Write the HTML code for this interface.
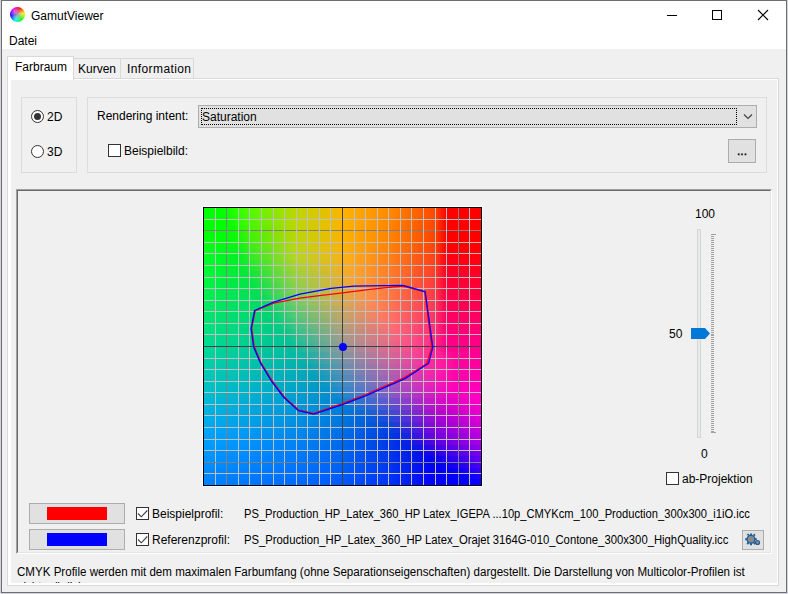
<!DOCTYPE html>
<html><head><meta charset="utf-8">
<style>
*{margin:0;padding:0;box-sizing:border-box}
html,body{width:788px;height:594px;overflow:hidden;background:#d2d2de}
body{position:relative;font-family:"Liberation Sans",sans-serif;font-size:12px;color:#000}
.a{position:absolute}
.t{position:absolute;font-size:12px;line-height:14px;white-space:nowrap;color:#000}
#win{position:absolute;left:1px;top:0;width:786px;height:593px;border:1px solid #6f6f6f;background:#f0f0f0;overflow:hidden}
#title{position:absolute;left:0;top:0;width:784px;height:48px;background:#fff}
.gb{position:absolute;border:1px solid #dcdcdc}
.btn{position:absolute;background:#e1e1e1;border:1px solid #adadad}
.cb{position:absolute;width:13px;height:13px;border:1px solid #333;background:#fff}
#grad i{position:absolute;left:0;width:277px;display:block}
#grid b{position:absolute;display:block}
#ticks b{position:absolute;display:block;background:#a0a0a0}
</style></head><body>
<div id="win">
</div>
<!-- everything positioned in page coordinates -->
<div class="a" style="left:2px;top:1px;width:784px;height:48px;background:#fff"></div>
<!-- icon -->
<div class="a" style="left:10px;top:7px;width:15px;height:15px;border-radius:50%;background:conic-gradient(from 20deg,#ff0000,#ffff00,#00ff00,#00ffff,#0000ff,#ff00ff,#ff0000)"></div>
<div class="a" style="left:10px;top:7px;width:15px;height:15px;border-radius:50%;background:radial-gradient(circle,rgba(170,170,170,.9) 0,rgba(200,200,200,.5) 35%,rgba(255,255,255,0) 70%)"></div>
<div class="t" style="left:31px;top:9px">GamutViewer</div>
<!-- window buttons -->
<div class="a" style="left:667px;top:15px;width:10px;height:1px;background:#000"></div>
<div class="a" style="left:712px;top:10px;width:10px;height:10px;border:1px solid #000"></div>
<svg class="a" style="left:757px;top:9px" width="12" height="12" viewBox="0 0 12 12"><path d="M1 1L11 11M11 1L1 11" stroke="#000" stroke-width="1.1" fill="none"/></svg>
<!-- menu -->
<div class="t" style="left:9px;top:34px">Datei</div>

<!-- tabs -->
<div class="a" style="left:73px;top:58px;width:48px;height:21px;border:1px solid #d9d9d9;background:#f0f0f0"></div>
<div class="a" style="left:120px;top:58px;width:74px;height:21px;border:1px solid #d9d9d9;background:#f0f0f0"></div>
<div class="a" style="left:7px;top:78px;width:772px;height:508px;border:1px solid #d9d9d9;background:#fff"></div>
<div class="a" style="left:7px;top:56px;width:67px;height:24px;border:1px solid #d9d9d9;border-bottom:none;background:#fff"></div>
<div class="t" style="left:15px;top:60px">Farbraum</div>
<div class="t" style="left:78px;top:62px">Kurven</div>
<div class="t" style="left:127px;top:62px;letter-spacing:0.4px">Information</div>
<!-- page panel -->
<div class="a" style="left:11px;top:80px;width:766px;height:503px;background:#f0f0f0"></div>

<!-- group 1 -->
<div class="gb" style="left:21px;top:97px;width:56px;height:76px"></div>
<div class="a" style="left:31px;top:110px;width:13px;height:13px;border-radius:50%;border:1px solid #333;background:#fff"></div>
<div class="a" style="left:34px;top:113px;width:7px;height:7px;border-radius:50%;background:#333"></div>
<div class="t" style="left:47px;top:110px">2D</div>
<div class="a" style="left:31px;top:145px;width:13px;height:13px;border-radius:50%;border:1px solid #333;background:#fff"></div>
<div class="t" style="left:47px;top:145px">3D</div>

<!-- group 2 -->
<div class="gb" style="left:87px;top:97px;width:680px;height:76px"></div>
<div class="t" style="left:97px;top:109px">Rendering intent:</div>
<div class="btn" style="left:198px;top:105px;width:559px;height:23px"></div>
<div class="a" style="left:201px;top:108px;width:536px;height:17px;border:1px dotted #000"></div>
<div class="t" style="left:202px;top:110px">Saturation</div>
<svg class="a" style="left:743px;top:113px" width="10" height="7" viewBox="0 0 10 7"><path d="M1 1.5L5 5.5L9 1.5" stroke="#444" stroke-width="1.2" fill="none"/></svg>
<div class="cb" style="left:108px;top:144px"></div>
<div class="t" style="left:124px;top:144px">Beispielbild:</div>
<div class="btn" style="left:728px;top:139px;width:28px;height:24px"></div>
<div class="t" style="left:737px;top:144px;-webkit-text-stroke:0.4px #000">...</div>

<!-- chart panel fixed3d -->
<div class="a" style="left:16px;top:189px;width:756px;height:365px;border-top:1px solid #a0a0a0;border-left:1px solid #a0a0a0;border-right:1px solid #fff;border-bottom:1px solid #fff"></div>
<div class="a" style="left:17px;top:190px;width:754px;height:363px;border-top:1px solid #696969;border-left:1px solid #696969;border-right:1px solid #e3e3e3;border-bottom:1px solid #e3e3e3"></div>

<!-- chart -->
<div class="a" style="left:202px;top:206px;width:281px;height:281px;border:1px solid #fff"></div>
<div class="a" style="left:203px;top:207px;width:279px;height:279px;border:1px solid #000;overflow:hidden">
 <div id="grad" class="a" style="left:0;top:0;width:277px;height:277px;overflow:hidden">
<i style="top:0px;height:7px;background:linear-gradient(90deg,#00ff00 0.0px,#00ff00 5.8px,#00ff00 11.5px,#04ff00 17.3px,#0cff00 23.1px,#1fff00 28.9px,#30ff00 34.6px,#42fc00 40.4px,#54fa00 46.2px,#61f500 51.9px,#6ef100 57.7px,#7ced00 63.5px,#89e900 69.2px,#96e400 75.0px,#a3e000 80.8px,#b1dc00 86.6px,#bed700 92.3px,#c5d300 98.1px,#cdce00 103.9px,#d5ca00 109.6px,#ddc500 115.4px,#e5c100 121.2px,#ecbc00 127.0px,#f4b800 132.7px,#fcb300 138.5px,#feae00 144.3px,#ffa900 150.0px,#ffa400 155.8px,#ff9f00 161.6px,#ff9900 167.4px,#ff9400 173.1px,#ff8f00 178.9px,#ff8a00 184.7px,#ff8200 190.4px,#ff7900 196.2px,#ff7100 202.0px,#ff6900 207.8px,#ff6100 213.5px,#ff5900 219.3px,#ff5100 225.1px,#ff4900 230.8px,#ff2400 236.6px,#ff0000 242.4px,#ff0000 248.1px,#ff0000 253.9px,#ff0000 259.7px,#ff0000 265.5px,#ff0000 271.2px,#ff0000 277.0px)"></i>
<i style="top:6px;height:7px;background:linear-gradient(90deg,#00ff00 0.0px,#00ff00 5.8px,#00ff00 11.5px,#00ff00 17.3px,#04ff00 23.1px,#18fe00 28.9px,#2afe00 34.6px,#3dfb00 40.4px,#4ff800 46.2px,#5df400 51.9px,#6bf000 57.7px,#79ec00 63.5px,#86e700 69.2px,#94e300 75.0px,#a2df00 80.8px,#b0db00 86.6px,#bdd700 92.3px,#c5d300 98.1px,#cdce00 103.9px,#d5ca00 109.6px,#dcc500 115.4px,#e4c100 121.2px,#ecbc00 127.0px,#f4b800 132.7px,#fcb300 138.5px,#fdae00 144.3px,#ffa900 150.0px,#ffa300 155.8px,#ff9e00 161.6px,#ff9900 167.4px,#ff9300 173.1px,#ff8e00 178.9px,#ff8900 184.7px,#ff8100 190.4px,#ff7800 196.2px,#ff7000 202.0px,#ff6800 207.8px,#ff6000 213.5px,#ff5800 219.3px,#ff5000 225.1px,#ff4800 230.8px,#ff2400 236.6px,#ff0000 242.4px,#ff0000 248.1px,#ff0000 253.9px,#ff0000 259.7px,#ff0000 265.5px,#ff0000 271.2px,#ff0000 277.0px)"></i>
<i style="top:12px;height:6px;background:linear-gradient(90deg,#00ff00 0.0px,#00ff00 5.8px,#00ff00 11.5px,#00ff00 17.3px,#00ff00 23.1px,#11fd00 28.9px,#24fd00 34.6px,#38fa00 40.4px,#4bf600 46.2px,#59f200 51.9px,#67ee00 57.7px,#76ea00 63.5px,#84e600 69.2px,#92e300 75.0px,#a0df00 80.8px,#afdb00 86.6px,#bdd700 92.3px,#c5d200 98.1px,#ccce00 103.9px,#d4c900 109.6px,#dcc500 115.4px,#e4c100 121.2px,#ecbc00 127.0px,#f4b800 132.7px,#fbb300 138.5px,#fdae00 144.3px,#ffa800 150.0px,#ffa300 155.8px,#ff9d00 161.6px,#ff9800 167.4px,#ff9200 173.1px,#ff8d00 178.9px,#ff8800 184.7px,#ff7f00 190.4px,#ff7700 196.2px,#ff6f00 202.0px,#ff6700 207.8px,#ff5f00 213.5px,#ff5700 219.3px,#ff4f00 225.1px,#ff4700 230.8px,#ff2400 236.6px,#ff0000 242.4px,#ff0000 248.1px,#ff0000 253.9px,#ff0000 259.7px,#ff0000 265.5px,#ff0000 271.2px,#ff0000 277.0px)"></i>
<i style="top:17px;height:7px;background:linear-gradient(90deg,#00ff01 0.0px,#00ff00 5.8px,#00ff00 11.5px,#00ff00 17.3px,#00ff00 23.1px,#0dfc00 28.9px,#1dfb00 34.6px,#32f800 40.4px,#46f500 46.2px,#55f100 51.9px,#64ed00 57.7px,#73e900 63.5px,#81e500 69.2px,#90e200 75.0px,#9fde00 80.8px,#aeda00 86.6px,#bdd600 92.3px,#c4d200 98.1px,#ccce00 103.9px,#d4c900 109.6px,#dcc500 115.4px,#e4c000 121.2px,#ebbc00 127.0px,#f3b800 132.7px,#fbb300 138.5px,#fdae00 144.3px,#ffa800 150.0px,#ffa200 155.8px,#ff9d00 161.6px,#ff9700 167.4px,#ff9200 173.1px,#ff8c00 178.9px,#ff8600 184.7px,#ff7e00 190.4px,#ff7600 196.2px,#ff6e00 202.0px,#ff6600 207.8px,#ff5e00 213.5px,#ff5600 219.3px,#ff4e00 225.1px,#ff4600 230.8px,#ff2300 236.6px,#ff0000 242.4px,#ff0000 248.1px,#ff0000 253.9px,#ff0000 259.7px,#ff0000 265.5px,#ff0000 271.2px,#ff0000 277.0px)"></i>
<i style="top:23px;height:7px;background:linear-gradient(90deg,#00ff04 0.0px,#00ff04 5.8px,#00ff04 11.5px,#00fe04 17.3px,#00fe04 23.1px,#0afb04 28.9px,#17f904 34.6px,#2df604 40.4px,#41f304 46.2px,#51ef04 51.9px,#60ec04 57.7px,#70e804 63.5px,#7fe404 69.2px,#8ee103 75.0px,#9edd03 80.8px,#adda03 86.6px,#bcd603 92.3px,#c4d203 98.1px,#cccd03 103.9px,#d4c902 109.6px,#dbc502 115.4px,#e3c001 121.2px,#ebbc01 127.0px,#f3b701 132.7px,#fbb301 138.5px,#fdad01 144.3px,#ffa801 150.0px,#ffa200 155.8px,#ff9c00 161.6px,#ff9600 167.4px,#ff9100 173.1px,#ff8b00 178.9px,#ff8500 184.7px,#ff7d00 190.4px,#ff7500 196.2px,#ff6d00 202.0px,#ff6500 207.8px,#ff5d00 213.5px,#ff5500 219.3px,#ff4d00 225.1px,#ff4500 230.8px,#ff2300 236.6px,#ff0000 242.4px,#ff0000 248.1px,#ff0000 253.9px,#ff0000 259.7px,#ff0000 265.5px,#ff0000 271.2px,#ff0000 277.0px)"></i>
<i style="top:29px;height:7px;background:linear-gradient(90deg,#00ff0c 0.0px,#00ff0c 5.8px,#00ff0c 11.5px,#00fd0b 17.3px,#00fc0b 23.1px,#07fa0b 28.9px,#11f70b 34.6px,#27f40b 40.4px,#3df10b 46.2px,#4dee0b 51.9px,#5dea0b 57.7px,#6de70b 63.5px,#7ce30b 69.2px,#8de00a 75.0px,#9cdc0a 80.8px,#acd90a 86.6px,#bcd60a 92.3px,#c4d109 98.1px,#cbcd08 103.9px,#d3c907 109.6px,#dbc406 115.4px,#e3c005 121.2px,#ebbc04 127.0px,#f2b703 132.7px,#fab302 138.5px,#fdad02 144.3px,#ffa702 150.0px,#ffa101 155.8px,#ff9c01 161.6px,#ff9601 167.4px,#ff9001 173.1px,#ff8a01 178.9px,#ff8401 184.7px,#ff7c01 190.4px,#ff7401 196.2px,#ff6c01 202.0px,#ff6401 207.8px,#ff5c01 213.5px,#ff5401 219.3px,#ff4c01 225.1px,#ff4401 230.8px,#ff2200 236.6px,#ff0000 242.4px,#ff0000 248.1px,#ff0000 253.9px,#ff0000 259.7px,#ff0000 265.5px,#ff0000 271.2px,#ff0000 277.0px)"></i>
<i style="top:35px;height:6px;background:linear-gradient(90deg,#00ff13 0.0px,#00fe13 5.8px,#00fe13 11.5px,#00fc13 17.3px,#00fa13 23.1px,#04f813 28.9px,#0bf513 34.6px,#22f213 40.4px,#38f013 46.2px,#49ec13 51.9px,#59e912 57.7px,#6ae612 63.5px,#7ae212 69.2px,#8bdf12 75.0px,#9bdc12 80.8px,#abd912 86.6px,#bcd512 92.3px,#c3d110 98.1px,#cbcd0f 103.9px,#d3c80d 109.6px,#dbc40c 115.4px,#e3c00a 121.2px,#eabb09 127.0px,#f2b708 132.7px,#fab306 138.5px,#fdad06 144.3px,#ffa706 150.0px,#ffa106 155.8px,#ff9b06 161.6px,#ff9505 167.4px,#ff8f05 173.1px,#ff8905 178.9px,#ff8305 184.7px,#ff7b05 190.4px,#ff7305 196.2px,#ff6b05 202.0px,#ff6305 207.8px,#ff5b05 213.5px,#ff5305 219.3px,#ff4b05 225.1px,#ff4305 230.8px,#ff2204 236.6px,#ff0004 242.4px,#ff0003 248.1px,#ff0003 253.9px,#ff0003 259.7px,#ff0003 265.5px,#ff0002 271.2px,#ff0002 277.0px)"></i>
<i style="top:40px;height:7px;background:linear-gradient(90deg,#00ff1b 0.0px,#00fd1b 5.8px,#00fc1b 11.5px,#00fa1b 17.3px,#00f81b 23.1px,#01f51b 28.9px,#05f31b 34.6px,#1df01b 40.4px,#34ee1b 46.2px,#45eb1b 51.9px,#56e81b 57.7px,#67e51b 63.5px,#77e11a 69.2px,#89de1a 75.0px,#99db1a 80.8px,#abd81a 86.6px,#bbd51a 92.3px,#c3d119 98.1px,#cbcc17 103.9px,#d3c816 109.6px,#dac414 115.4px,#e2c012 121.2px,#eabb11 127.0px,#f2b70f 132.7px,#fab30e 138.5px,#fcad0e 144.3px,#ffa70e 150.0px,#ffa10d 155.8px,#ff9b0d 161.6px,#ff940d 167.4px,#ff8e0d 173.1px,#ff880d 178.9px,#ff820d 184.7px,#ff7a0d 190.4px,#ff720d 196.2px,#ff6a0d 202.0px,#ff620d 207.8px,#ff5a0d 213.5px,#ff520d 219.3px,#ff4b0d 225.1px,#ff430d 230.8px,#ff210c 236.6px,#ff000b 242.4px,#ff000a 248.1px,#ff000a 253.9px,#ff0009 259.7px,#ff0008 265.5px,#ff0007 271.2px,#ff0007 277.0px)"></i>
<i style="top:46px;height:7px;background:linear-gradient(90deg,#00fe22 0.0px,#00fc22 5.8px,#00fa22 11.5px,#00f822 17.3px,#00f622 23.1px,#00f323 28.9px,#01f123 34.6px,#14ef23 40.4px,#2cec23 46.2px,#3ee923 51.9px,#4fe623 57.7px,#60e323 63.5px,#71e023 69.2px,#83dd23 75.0px,#94da23 80.8px,#a6d723 86.6px,#b7d423 92.3px,#bfd021 98.1px,#c7cc20 103.9px,#cfc71e 109.6px,#d7c31c 115.4px,#dfbf1b 121.2px,#e7bb19 127.0px,#efb717 132.7px,#f7b216 138.5px,#fcac15 144.3px,#ffa615 150.0px,#ffa015 155.8px,#ff9a15 161.6px,#ff9415 167.4px,#ff8d14 173.1px,#ff8714 178.9px,#ff8114 184.7px,#ff7914 190.4px,#ff7114 196.2px,#ff6914 202.0px,#ff6115 207.8px,#ff5915 213.5px,#ff5115 219.3px,#ff4915 225.1px,#ff4215 230.8px,#ff2114 236.6px,#ff0013 242.4px,#ff0012 248.1px,#ff0011 253.9px,#ff0010 259.7px,#ff000f 265.5px,#ff000e 271.2px,#ff000d 277.0px)"></i>
<i style="top:52px;height:7px;background:linear-gradient(90deg,#00fc2a 0.0px,#00fa2a 5.8px,#00f82a 11.5px,#00f62a 17.3px,#00f42a 23.1px,#00f12a 28.9px,#00ef2a 34.6px,#0eed2a 40.4px,#21ea2b 46.2px,#33e82b 51.9px,#45e52b 57.7px,#56e22b 63.5px,#68df2b 69.2px,#7adc2b 75.0px,#8bd92b 80.8px,#9dd62b 86.6px,#afd32b 92.3px,#b8cf2a 98.1px,#c0cb28 103.9px,#c9c726 109.6px,#d1c225 115.4px,#dabe23 121.2px,#e2ba21 127.0px,#ebb620 132.7px,#f3b11e 138.5px,#faab1e 144.3px,#ffa51d 150.0px,#ff9f1d 155.8px,#ff991d 161.6px,#ff921c 167.4px,#ff8c1c 173.1px,#ff861c 178.9px,#ff801b 184.7px,#ff781b 190.4px,#ff701c 196.2px,#ff681c 202.0px,#ff601c 207.8px,#ff581c 213.5px,#ff501c 219.3px,#ff481d 225.1px,#ff401d 230.8px,#ff201c 236.6px,#ff001b 242.4px,#ff001a 248.1px,#ff0019 253.9px,#ff0018 259.7px,#ff0017 265.5px,#ff0016 271.2px,#ff0015 277.0px)"></i>
<i style="top:58px;height:6px;background:linear-gradient(90deg,#00fa31 0.0px,#00f831 5.8px,#00f631 11.5px,#00f432 17.3px,#00f232 23.1px,#00ef32 28.9px,#00ed32 34.6px,#08eb32 40.4px,#16e932 46.2px,#29e633 51.9px,#3ae333 57.7px,#4de033 63.5px,#5edd33 69.2px,#71db33 75.0px,#83d834 80.8px,#95d534 86.6px,#a7d234 92.3px,#b0ce32 98.1px,#b9ca30 103.9px,#c2c62f 109.6px,#cbc12d 115.4px,#d4bd2b 121.2px,#ddb92a 127.0px,#e6b528 132.7px,#efb126 138.5px,#f7aa26 144.3px,#fea425 150.0px,#ff9e25 155.8px,#ff9824 161.6px,#ff9124 167.4px,#ff8b23 173.1px,#ff8523 178.9px,#ff7f23 184.7px,#ff7723 190.4px,#ff6f23 196.2px,#ff6723 202.0px,#ff5f24 207.8px,#ff5724 213.5px,#ff4f24 219.3px,#ff4724 225.1px,#ff3f25 230.8px,#ff2024 236.6px,#ff0023 242.4px,#ff0022 248.1px,#ff0021 253.9px,#ff0020 259.7px,#ff001f 265.5px,#ff001f 271.2px,#ff001e 277.0px)"></i>
<i style="top:63px;height:7px;background:linear-gradient(90deg,#00f839 0.0px,#00f639 5.8px,#00f439 11.5px,#00f239 17.3px,#00ef39 23.1px,#00ed3a 28.9px,#00eb3a 34.6px,#03e93a 40.4px,#0ce73a 46.2px,#1ee43b 51.9px,#30e23b 57.7px,#43df3b 63.5px,#55dc3b 69.2px,#68d93c 75.0px,#7ad73c 80.8px,#8cd43c 86.6px,#9ed13c 92.3px,#a8cd3b 98.1px,#b1c939 103.9px,#bbc537 109.6px,#c4c035 115.4px,#cebc34 121.2px,#d7b832 127.0px,#e1b430 132.7px,#eab02e 138.5px,#f3a92e 144.3px,#fba32d 150.0px,#fe9d2d 155.8px,#ff972c 161.6px,#ff902b 167.4px,#ff8a2b 173.1px,#ff842a 178.9px,#ff7d2a 184.7px,#ff762a 190.4px,#ff6e2a 196.2px,#ff662b 202.0px,#ff5e2b 207.8px,#ff562b 213.5px,#ff4e2c 219.3px,#ff462c 225.1px,#ff3e2c 230.8px,#ff1f2c 236.6px,#ff002b 242.4px,#ff002a 248.1px,#ff0029 253.9px,#ff0028 259.7px,#ff0028 265.5px,#ff0027 271.2px,#ff0026 277.0px)"></i>
<i style="top:69px;height:7px;background:linear-gradient(90deg,#00f540 0.0px,#00f340 5.8px,#00f141 11.5px,#00ef41 17.3px,#00ed41 23.1px,#00eb41 28.9px,#00e942 34.6px,#02e742 40.4px,#05e542 46.2px,#14e343 51.9px,#26e043 57.7px,#39dd43 63.5px,#4cdb44 69.2px,#5ed844 75.0px,#71d644 80.8px,#84d345 86.6px,#96d045 92.3px,#a1cc43 98.1px,#aac841 103.9px,#b4c440 109.6px,#bec03e 115.4px,#c8bb3c 121.2px,#d2b73a 127.0px,#dcb338 132.7px,#e6af37 138.5px,#efa836 144.3px,#f7a235 150.0px,#fc9c34 155.8px,#ff9634 161.6px,#ff8f33 167.4px,#ff8932 173.1px,#ff8332 178.9px,#ff7c31 184.7px,#ff7431 190.4px,#ff6c32 196.2px,#ff6432 202.0px,#ff5d33 207.8px,#ff5533 213.5px,#ff4d33 219.3px,#ff4534 225.1px,#ff3d34 230.8px,#ff1f34 236.6px,#ff0033 242.4px,#ff0032 248.1px,#ff0031 253.9px,#ff0030 259.7px,#ff0030 265.5px,#ff002f 271.2px,#ff002e 277.0px)"></i>
<i style="top:75px;height:7px;background:linear-gradient(90deg,#00f347 0.0px,#00f148 5.8px,#00ef48 11.5px,#00ed48 17.3px,#00eb49 23.1px,#00e949 28.9px,#00e749 34.6px,#00e64a 40.4px,#02e44a 46.2px,#0de14b 51.9px,#1cdf4b 57.7px,#2fdc4b 63.5px,#42d94c 69.2px,#55d74c 75.0px,#68d44d 80.8px,#7bd24d 86.6px,#8ecf4e 92.3px,#99cb4c 98.1px,#a3c74a 103.9px,#aec348 109.6px,#b8bf46 115.4px,#c3ba44 121.2px,#cdb643 127.0px,#d8b241 132.7px,#e2ae3f 138.5px,#eaa73e 144.3px,#f3a13d 150.0px,#fa9b3c 155.8px,#ff943c 161.6px,#ff8e3b 167.4px,#ff883a 173.1px,#ff8139 178.9px,#ff7b38 184.7px,#ff7339 190.4px,#ff6b39 196.2px,#ff633a 202.0px,#ff5b3a 207.8px,#ff533b 213.5px,#ff4b3b 219.3px,#ff443c 225.1px,#ff3c3c 230.8px,#ff1e3b 236.6px,#ff003b 242.4px,#ff003a 248.1px,#ff0039 253.9px,#ff0039 259.7px,#ff0038 265.5px,#ff0037 271.2px,#ff0036 277.0px)"></i>
<i style="top:81px;height:7px;background:linear-gradient(90deg,#00f04f 0.0px,#00ef4f 5.8px,#00ed50 11.5px,#00eb50 17.3px,#00e950 23.1px,#00e751 28.9px,#00e551 34.6px,#00e452 40.4px,#00e252 46.2px,#06df52 51.9px,#12dd53 57.7px,#25db54 63.5px,#39d854 69.2px,#4cd655 75.0px,#5fd355 80.8px,#73d156 86.6px,#86ce56 92.3px,#91ca54 98.1px,#9cc652 103.9px,#a7c250 109.6px,#b2be4f 115.4px,#bdba4d 121.2px,#c8b54b 127.0px,#d3b149 132.7px,#dead47 138.5px,#e6a746 144.3px,#efa045 150.0px,#f69a44 155.8px,#fd9343 161.6px,#ff8d42 167.4px,#ff8741 173.1px,#ff8040 178.9px,#ff7a40 184.7px,#ff7240 190.4px,#ff6a41 196.2px,#ff6241 202.0px,#ff5a42 207.8px,#ff5242 213.5px,#ff4a43 219.3px,#ff4243 225.1px,#ff3a44 230.8px,#ff1e43 236.6px,#ff0043 242.4px,#ff0042 248.1px,#ff0041 253.9px,#ff0041 259.7px,#ff0040 265.5px,#ff003f 271.2px,#ff003f 277.0px)"></i>
<i style="top:87px;height:6px;background:linear-gradient(90deg,#00ee56 0.0px,#00ec57 5.8px,#00eb57 11.5px,#00e958 17.3px,#00e758 23.1px,#00e559 28.9px,#00e459 34.6px,#00e259 40.4px,#00e05a 46.2px,#01de5a 51.9px,#08db5b 57.7px,#1cd95c 63.5px,#2fd75c 69.2px,#43d55d 75.0px,#56d25e 80.8px,#6ad05e 86.6px,#7ece5f 92.3px,#89c95d 98.1px,#95c55b 103.9px,#a0c159 109.6px,#acbd57 115.4px,#b7b955 121.2px,#c3b453 127.0px,#ceb051 132.7px,#d9ac4f 138.5px,#e2a64e 144.3px,#ea9f4d 150.0px,#f3994c 155.8px,#fa924b 161.6px,#fd8c4a 167.4px,#ff8649 173.1px,#ff7f48 178.9px,#ff7947 184.7px,#ff7147 190.4px,#ff6948 196.2px,#ff6149 202.0px,#ff5949 207.8px,#ff514a 213.5px,#ff494a 219.3px,#ff414b 225.1px,#ff394c 230.8px,#ff1d4b 236.6px,#ff004a 242.4px,#ff004a 248.1px,#ff0049 253.9px,#ff0049 259.7px,#ff0048 265.5px,#ff0048 271.2px,#ff0047 277.0px)"></i>
<i style="top:92px;height:7px;background:linear-gradient(90deg,#00ec5e 0.0px,#00ea5e 5.8px,#00e85f 11.5px,#00e75f 17.3px,#00e560 23.1px,#00e360 28.9px,#00e160 34.6px,#00e061 40.4px,#00de61 46.2px,#01dc62 51.9px,#02da63 57.7px,#10d763 63.5px,#23d564 69.2px,#37d365 75.0px,#4bd165 80.8px,#5fce66 86.6px,#73cc67 92.3px,#7fc865 98.1px,#8bc463 103.9px,#97c061 109.6px,#a3bb5f 115.4px,#b0b75d 121.2px,#bbb35b 127.0px,#c8af5a 132.7px,#d3aa58 138.5px,#dca456 144.3px,#e49e55 150.0px,#ed9754 155.8px,#f59153 161.6px,#fb8b52 167.4px,#fe8451 173.1px,#ff7e50 178.9px,#ff774f 184.7px,#ff6f4f 190.4px,#ff6750 196.2px,#ff5f50 202.0px,#ff5851 207.8px,#ff5051 213.5px,#ff4852 219.3px,#ff4053 225.1px,#ff3853 230.8px,#ff1c53 236.6px,#ff0052 242.4px,#ff0052 248.1px,#ff0051 253.9px,#ff0051 259.7px,#ff0050 265.5px,#ff0050 271.2px,#ff004f 277.0px)"></i>
<i style="top:98px;height:7px;background:linear-gradient(90deg,#00e965 0.0px,#00e866 5.8px,#00e666 11.5px,#00e466 17.3px,#00e367 23.1px,#00e167 28.9px,#00df68 34.6px,#00dd68 40.4px,#00dc68 46.2px,#00da69 51.9px,#01d76a 57.7px,#08d56a 63.5px,#16d36b 69.2px,#2ad16c 75.0px,#3ecf6c 80.8px,#52cd6d 86.6px,#66ca6e 92.3px,#73c66c 98.1px,#7fc26a 103.9px,#8cbe69 109.6px,#99b967 115.4px,#a6b565 121.2px,#b2b163 127.0px,#bfac62 132.7px,#cba860 138.5px,#d4a25f 144.3px,#dc9c5e 150.0px,#e5955d 155.8px,#ed8f5c 161.6px,#f6895a 167.4px,#fc8259 173.1px,#fe7c58 178.9px,#ff7657 184.7px,#ff6e57 190.4px,#ff6658 196.2px,#ff5e58 202.0px,#ff5659 207.8px,#ff4e59 213.5px,#ff465a 219.3px,#ff3e5a 225.1px,#ff365b 230.8px,#ff1c5a 236.6px,#ff005a 242.4px,#ff0059 248.1px,#ff0059 253.9px,#ff0059 259.7px,#ff0058 265.5px,#ff0058 271.2px,#ff0057 277.0px)"></i>
<i style="top:104px;height:7px;background:linear-gradient(90deg,#00e76d 0.0px,#00e56d 5.8px,#00e46d 11.5px,#00e26e 17.3px,#00e06e 23.1px,#00df6e 28.9px,#00dd6f 34.6px,#00db6f 40.4px,#00d96f 46.2px,#00d770 51.9px,#00d571 57.7px,#04d371 63.5px,#0bd172 69.2px,#1ccf73 75.0px,#30cd73 80.8px,#45cb74 86.6px,#59c975 92.3px,#67c473 98.1px,#73c072 103.9px,#81bc70 109.6px,#8eb76f 115.4px,#9cb36d 121.2px,#a8af6c 127.0px,#b6aa6a 132.7px,#c3a669 138.5px,#cca067 144.3px,#d49966 150.0px,#dd9365 155.8px,#e68d64 161.6px,#ee8763 167.4px,#f78162 173.1px,#fc7a60 178.9px,#ff745f 184.7px,#ff6c60 190.4px,#ff6460 196.2px,#ff5c60 202.0px,#ff5461 207.8px,#ff4c61 213.5px,#ff4462 219.3px,#ff3c62 225.1px,#ff3462 230.8px,#ff1b62 236.6px,#ff0062 242.4px,#ff0061 248.1px,#ff0061 253.9px,#ff0060 259.7px,#ff0060 265.5px,#ff0060 271.2px,#ff005f 277.0px)"></i>
<i style="top:110px;height:6px;background:linear-gradient(90deg,#00e574 0.0px,#00e374 5.8px,#00e175 11.5px,#00e075 17.3px,#00de75 23.1px,#00dc75 28.9px,#00da76 34.6px,#00d976 40.4px,#00d776 46.2px,#00d577 51.9px,#00d378 57.7px,#00d178 63.5px,#04cf79 69.2px,#12cd7a 75.0px,#23cb7a 80.8px,#37c97b 86.6px,#4cc77c 92.3px,#5ac27a 98.1px,#68be79 103.9px,#76ba78 109.6px,#83b576 115.4px,#92b175 121.2px,#9fac74 127.0px,#ada873 132.7px,#bba471 138.5px,#c49e70 144.3px,#cc976f 150.0px,#d5916e 155.8px,#de8b6c 161.6px,#e7856b 167.4px,#ef7f6a 173.1px,#f87969 178.9px,#fe7368 184.7px,#ff6b68 190.4px,#ff6368 196.2px,#ff5b68 202.0px,#ff5369 207.8px,#ff4b69 213.5px,#ff4369 219.3px,#ff3b6a 225.1px,#ff336a 230.8px,#ff1a6a 236.6px,#ff0069 242.4px,#ff0069 248.1px,#ff0069 253.9px,#ff0068 259.7px,#ff0068 265.5px,#ff0068 271.2px,#ff0067 277.0px)"></i>
<i style="top:115px;height:7px;background:linear-gradient(90deg,#00e37b 0.0px,#00e17c 5.8px,#00df7c 11.5px,#00dd7c 17.3px,#00dc7c 23.1px,#00da7d 28.9px,#00d87d 34.6px,#00d67d 40.4px,#00d57e 46.2px,#00d37e 51.9px,#00d17f 57.7px,#00cf7f 63.5px,#00cd80 69.2px,#07cb81 75.0px,#15c981 80.8px,#2ac782 86.6px,#3fc583 92.3px,#4ec082 98.1px,#5cbc80 103.9px,#6bb87f 109.6px,#79b37e 115.4px,#88af7d 121.2px,#96aa7c 127.0px,#a5a67b 132.7px,#b3a17a 138.5px,#bc9b78 144.3px,#c49577 150.0px,#cd8f76 155.8px,#d68975 161.6px,#df8374 167.4px,#e87d72 173.1px,#f17771 178.9px,#f97170 184.7px,#fe6970 190.4px,#ff6170 196.2px,#ff5971 202.0px,#ff5171 207.8px,#ff4971 213.5px,#ff4171 219.3px,#ff3971 225.1px,#ff3171 230.8px,#ff1971 236.6px,#ff0071 242.4px,#ff0071 248.1px,#ff0070 253.9px,#ff0070 259.7px,#ff0070 265.5px,#ff0070 271.2px,#ff006f 277.0px)"></i>
<i style="top:121px;height:7px;background:linear-gradient(90deg,#00e083 0.0px,#00df83 5.8px,#00dd83 11.5px,#00db83 17.3px,#00d984 23.1px,#00d884 28.9px,#00d684 34.6px,#00d484 40.4px,#00d285 46.2px,#00d085 51.9px,#00ce86 57.7px,#00cd87 63.5px,#00cb87 69.2px,#01c988 75.0px,#08c788 80.8px,#1dc589 86.6px,#32c38a 92.3px,#41bf89 98.1px,#50ba88 103.9px,#5fb687 109.6px,#6eb186 115.4px,#7ead85 121.2px,#8ca884 127.0px,#9ca483 132.7px,#ab9f82 138.5px,#b49981 144.3px,#bc9380 150.0px,#c58d7e 155.8px,#ce877d 161.6px,#d7817c 167.4px,#e07b7b 173.1px,#e9757a 178.9px,#f26f78 184.7px,#fa6778 190.4px,#fe5f79 196.2px,#ff5779 202.0px,#ff4f79 207.8px,#ff4779 213.5px,#ff3f79 219.3px,#ff3779 225.1px,#ff2f79 230.8px,#ff1879 236.6px,#ff0079 242.4px,#ff0078 248.1px,#ff0078 253.9px,#ff0078 259.7px,#ff0078 265.5px,#ff0078 271.2px,#ff0077 277.0px)"></i>
<i style="top:127px;height:7px;background:linear-gradient(90deg,#00de8a 0.0px,#00dc8a 5.8px,#00db8b 11.5px,#00d98b 17.3px,#00d78b 23.1px,#00d58b 28.9px,#00d38b 34.6px,#00d28b 40.4px,#00d08c 46.2px,#00ce8c 51.9px,#00cc8d 57.7px,#00ca8e 63.5px,#00c98e 69.2px,#00c78f 75.0px,#01c58f 80.8px,#10c390 86.6px,#25c191 92.3px,#35bd90 98.1px,#44b88f 103.9px,#54b48f 109.6px,#64af8e 115.4px,#74aa8d 121.2px,#83a68c 127.0px,#93a18b 132.7px,#a39d8b 138.5px,#ac9789 144.3px,#b59188 150.0px,#be8b87 155.8px,#c78586 161.6px,#d08084 167.4px,#d97a83 173.1px,#e27482 178.9px,#eb6e81 184.7px,#f26681 190.4px,#fa5e81 196.2px,#fe5681 202.0px,#ff4e81 207.8px,#ff4681 213.5px,#ff3e81 219.3px,#ff3680 225.1px,#ff2e80 230.8px,#ff1780 236.6px,#ff0080 242.4px,#ff0080 248.1px,#ff0080 253.9px,#ff0080 259.7px,#ff0080 265.5px,#ff0080 271.2px,#ff007f 277.0px)"></i>
<i style="top:133px;height:6px;background:linear-gradient(90deg,#00dc92 0.0px,#00da92 5.8px,#00d892 11.5px,#00d792 17.3px,#00d592 23.1px,#00d392 28.9px,#00d192 34.6px,#00cf93 40.4px,#00cd93 46.2px,#00cc93 51.9px,#00ca94 57.7px,#00c895 63.5px,#00c695 69.2px,#00c596 75.0px,#00c397 80.8px,#09c197 86.6px,#18bf98 92.3px,#28bb97 98.1px,#38b697 103.9px,#49b296 109.6px,#59ad95 115.4px,#6aa895 121.2px,#7aa494 127.0px,#8a9f94 132.7px,#9a9b93 138.5px,#a49592 144.3px,#ad8f91 150.0px,#b6898f 155.8px,#bf838e 161.6px,#c87e8d 167.4px,#d1788c 173.1px,#da728a 178.9px,#e36c89 184.7px,#eb6489 190.4px,#f25c89 196.2px,#fa5489 202.0px,#fe4c89 207.8px,#ff4488 213.5px,#ff3c88 219.3px,#ff3488 225.1px,#ff2c88 230.8px,#ff1688 236.6px,#ff0088 242.4px,#ff0088 248.1px,#ff0088 253.9px,#ff0088 259.7px,#ff0088 265.5px,#ff0087 271.2px,#ff0087 277.0px)"></i>
<i style="top:138px;height:7px;background:linear-gradient(90deg,#00d999 0.0px,#00d799 5.8px,#00d699 11.5px,#00d499 17.3px,#00d299 23.1px,#00d099 28.9px,#00ce99 34.6px,#00cc99 40.4px,#00cb9a 46.2px,#00c99a 51.9px,#00c79b 57.7px,#00c59b 63.5px,#00c49c 69.2px,#00c29d 75.0px,#00c09d 80.8px,#04be9e 86.6px,#0dbd9e 92.3px,#1bb89e 98.1px,#2bb49e 103.9px,#3caf9d 109.6px,#4dab9d 115.4px,#5ea69c 121.2px,#6ea29c 127.0px,#7f9d9b 132.7px,#90989b 138.5px,#99939a 144.3px,#a28d98 150.0px,#ac8797 155.8px,#b58296 161.6px,#be7c95 167.4px,#c77693 173.1px,#d17092 178.9px,#da6b91 184.7px,#e26391 190.4px,#e95a90 196.2px,#f15290 202.0px,#f94a90 207.8px,#fe4290 213.5px,#fe3a90 219.3px,#ff328f 225.1px,#ff2a8f 230.8px,#ff1b8f 236.6px,#ff058f 242.4px,#ff018f 248.1px,#ff018f 253.9px,#ff008f 259.7px,#ff008f 265.5px,#ff008f 271.2px,#ff008f 277.0px)"></i>
<i style="top:144px;height:7px;background:linear-gradient(90deg,#00d69f 0.0px,#00d49f 5.8px,#00d2a0 11.5px,#00d0a0 17.3px,#00cfa0 23.1px,#00cda0 28.9px,#00cba0 34.6px,#00c9a0 40.4px,#00c7a0 46.2px,#00c6a1 51.9px,#00c4a1 57.7px,#00c2a2 63.5px,#00c0a2 69.2px,#00bea3 75.0px,#00bda4 80.8px,#00bba4 86.6px,#04b9a5 92.3px,#10b5a4 98.1px,#1db0a4 103.9px,#2eaca4 109.6px,#3fa8a3 115.4px,#50a3a3 121.2px,#609fa3 127.0px,#719ba2 132.7px,#8296a2 138.5px,#8c91a1 144.3px,#958b9f 150.0px,#9f859e 155.8px,#a8809d 161.6px,#b27a9c 167.4px,#bc749b 173.1px,#c56f99 178.9px,#cf6998 184.7px,#d76198 190.4px,#df5998 196.2px,#e85097 202.0px,#f04897 207.8px,#f84097 213.5px,#fd3896 219.3px,#fe3096 225.1px,#ff2896 230.8px,#ff1f96 236.6px,#ff1096 242.4px,#ff0895 248.1px,#ff0495 253.9px,#ff0195 259.7px,#ff0095 265.5px,#ff0095 271.2px,#ff0095 277.0px)"></i>
<i style="top:150px;height:7px;background:linear-gradient(90deg,#00d2a6 0.0px,#00d0a6 5.8px,#00cfa6 11.5px,#00cda6 17.3px,#00cba6 23.1px,#00c9a7 28.9px,#00c8a7 34.6px,#00c6a7 40.4px,#00c4a7 46.2px,#00c2a7 51.9px,#00c0a8 57.7px,#00bfa8 63.5px,#00bda9 69.2px,#00bba9 75.0px,#00b9aa 80.8px,#00b7aa 86.6px,#00b5ab 92.3px,#06b1ab 98.1px,#11adaa 103.9px,#20a9aa 109.6px,#31a5aa 115.4px,#42a1aa 121.2px,#539da9 127.0px,#6498a9 132.7px,#7494a9 138.5px,#7e8fa8 144.3px,#8889a7 150.0px,#9283a5 155.8px,#9c7ea4 161.6px,#a678a3 167.4px,#b073a2 173.1px,#ba6da1 178.9px,#c4679f 184.7px,#cd5f9f 190.4px,#d5579f 196.2px,#de4f9e 202.0px,#e7469e 207.8px,#f03e9e 213.5px,#f8369d 219.3px,#fe2e9d 225.1px,#ff259c 230.8px,#ff1d9c 236.6px,#ff159c 242.4px,#ff0c9c 248.1px,#ff049c 253.9px,#ff029c 259.7px,#ff009c 265.5px,#ff009b 271.2px,#ff009b 277.0px)"></i>
<i style="top:156px;height:7px;background:linear-gradient(90deg,#00cfad 0.0px,#00cdad 5.8px,#00cbad 11.5px,#00caad 17.3px,#00c8ad 23.1px,#00c6ad 28.9px,#00c4ad 34.6px,#00c3ad 40.4px,#00c1ad 46.2px,#00bfae 51.9px,#00bdae 57.7px,#00bbaf 63.5px,#00b9af 69.2px,#00b7b0 75.0px,#00b6b0 80.8px,#00b4b1 86.6px,#00b2b1 92.3px,#00aeb1 98.1px,#06aab1 103.9px,#14a6b1 109.6px,#23a2b1 115.4px,#349eb0 121.2px,#459ab0 127.0px,#5696b0 132.7px,#6792b0 138.5px,#718daf 144.3px,#7b87ae 150.0px,#8682ac 155.8px,#907cab 161.6px,#9a76aa 167.4px,#a471a9 173.1px,#ae6ba8 178.9px,#b966a7 184.7px,#c25da6 190.4px,#cb55a6 196.2px,#d54da5 202.0px,#de44a5 207.8px,#e73ca4 213.5px,#f034a4 219.3px,#fa2ba4 225.1px,#ff23a3 230.8px,#ff1ba3 236.6px,#ff12a3 242.4px,#ff0aa3 248.1px,#ff02a2 253.9px,#ff01a2 259.7px,#ff00a2 265.5px,#ff00a2 271.2px,#ff00a2 277.0px)"></i>
<i style="top:162px;height:6px;background:linear-gradient(90deg,#00cbb4 0.0px,#00cab4 5.8px,#00c8b4 11.5px,#00c6b4 17.3px,#00c5b4 23.1px,#00c3b4 28.9px,#00c1b4 34.6px,#00bfb4 40.4px,#00beb4 46.2px,#00bcb4 51.9px,#00bab5 57.7px,#00b8b5 63.5px,#00b6b6 69.2px,#00b4b6 75.0px,#00b2b6 80.8px,#00b0b7 86.6px,#00aeb7 92.3px,#00aab7 98.1px,#00a7b7 103.9px,#07a3b7 109.6px,#159fb7 115.4px,#269bb7 121.2px,#3798b7 127.0px,#4894b7 132.7px,#5990b7 138.5px,#648bb6 144.3px,#6e85b5 150.0px,#7980b4 155.8px,#837ab2 161.6px,#8e75b1 167.4px,#986fb0 173.1px,#a36aaf 178.9px,#ad64ae 184.7px,#b75cad 190.4px,#c153ad 196.2px,#cb4bac 202.0px,#d442ac 207.8px,#de3aab 213.5px,#e832ab 219.3px,#f229aa 225.1px,#fb21aa 230.8px,#ff18aa 236.6px,#ff10a9 242.4px,#ff09a9 248.1px,#ff00a9 253.9px,#ff00a9 259.7px,#ff00a9 265.5px,#ff00a8 271.2px,#ff00a8 277.0px)"></i>
<i style="top:167px;height:7px;background:linear-gradient(90deg,#00c8ba 0.0px,#00c6ba 5.8px,#00c5ba 11.5px,#00c3ba 17.3px,#00c1ba 23.1px,#00c0ba 28.9px,#00bebb 34.6px,#00bcbb 40.4px,#00babb 46.2px,#00b8bb 51.9px,#00b6bb 57.7px,#00b4bc 63.5px,#00b2bc 69.2px,#00b0bc 75.0px,#00aebd 80.8px,#00acbd 86.6px,#00aabd 92.3px,#00a7be 98.1px,#00a3be 103.9px,#00a0be 109.6px,#089cbe 115.4px,#1999be 121.2px,#2a95be 127.0px,#3b92be 132.7px,#4b8ebe 138.5px,#5689bd 144.3px,#6183bc 150.0px,#6c7ebb 155.8px,#7778ba 161.6px,#8273b8 167.4px,#8d6db7 173.1px,#9868b6 178.9px,#a262b5 184.7px,#ad5ab4 190.4px,#b751b4 196.2px,#c149b3 202.0px,#cb40b3 207.8px,#d638b2 213.5px,#e030b2 219.3px,#ea27b1 225.1px,#f41fb0 230.8px,#fb16b0 236.6px,#ff0eb0 242.4px,#ff07b0 248.1px,#ff00af 253.9px,#ff00af 259.7px,#ff00af 265.5px,#ff00af 271.2px,#ff00ae 277.0px)"></i>
<i style="top:173px;height:7px;background:linear-gradient(90deg,#00c4c1 0.0px,#00c3c1 5.8px,#00c1c1 11.5px,#00bfc1 17.3px,#00bec1 23.1px,#00bcc1 28.9px,#00bbc1 34.6px,#00b9c1 40.4px,#00b7c1 46.2px,#00b5c1 51.9px,#00b3c2 57.7px,#00b1c2 63.5px,#00afc2 69.2px,#00adc3 75.0px,#00abc3 80.8px,#00a9c3 86.6px,#00a7c4 92.3px,#00a4c4 98.1px,#00a0c4 103.9px,#009dc4 109.6px,#0199c4 115.4px,#0b96c5 121.2px,#1c93c5 127.0px,#2d8fc5 132.7px,#3e8cc5 138.5px,#4986c4 144.3px,#5481c3 150.0px,#607cc2 155.8px,#6b76c1 161.6px,#7671c0 167.4px,#816cbf 173.1px,#8c66bd 178.9px,#9761bc 184.7px,#a258bc 190.4px,#ad50bb 196.2px,#b847ba 202.0px,#c23fba 207.8px,#cd36b9 213.5px,#d82db8 219.3px,#e325b8 225.1px,#ed1cb7 230.8px,#f414b7 236.6px,#fb0cb7 242.4px,#fe06b6 248.1px,#fe00b6 253.9px,#ff00b6 259.7px,#ff00b5 265.5px,#ff00b5 271.2px,#ff00b5 277.0px)"></i>
<i style="top:179px;height:7px;background:linear-gradient(90deg,#00c1c8 0.0px,#00bfc8 5.8px,#00bec8 11.5px,#00bcc8 17.3px,#00bac8 23.1px,#00b9c8 28.9px,#00b7c8 34.6px,#00b6c8 40.4px,#00b4c8 46.2px,#00b2c8 51.9px,#00b0c8 57.7px,#00aec9 63.5px,#00acc9 69.2px,#00a9c9 75.0px,#00a7c9 80.8px,#00a5ca 86.6px,#00a3ca 92.3px,#00a0ca 98.1px,#009dca 103.9px,#009acb 109.6px,#0096cb 115.4px,#0493cb 121.2px,#0e90cc 127.0px,#1f8dcc 132.7px,#308acc 138.5px,#3c84cb 144.3px,#477fca 150.0px,#537ac9 155.8px,#5e74c8 161.6px,#6a6fc7 167.4px,#756ac6 173.1px,#8165c5 178.9px,#8c5fc4 184.7px,#9856c3 190.4px,#a34ec2 196.2px,#ae45c1 202.0px,#b93dc1 207.8px,#c534c0 213.5px,#d02bbf 219.3px,#db23be 225.1px,#e61abe 230.8px,#ed12bd 236.6px,#f309bd 242.4px,#fa05bd 248.1px,#fd00bc 253.9px,#fe00bc 259.7px,#ff00bc 265.5px,#ff00bc 271.2px,#ff00bb 277.0px)"></i>
<i style="top:185px;height:6px;background:linear-gradient(90deg,#00bdcf 0.0px,#00bccf 5.8px,#00bace 11.5px,#00b9ce 17.3px,#00b7ce 23.1px,#00b5ce 28.9px,#00b4ce 34.6px,#00b2ce 40.4px,#00b1ce 46.2px,#00aece 51.9px,#00acce 57.7px,#00aace 63.5px,#00a8cf 69.2px,#00a6cf 75.0px,#00a4cf 80.8px,#00a2cf 86.6px,#00a0cf 92.3px,#009ccf 98.1px,#0099d0 103.9px,#0096d0 109.6px,#0093d0 115.4px,#0290d0 121.2px,#058dd1 127.0px,#0f8ad1 132.7px,#2087d1 138.5px,#2b81d0 144.3px,#377ccf 150.0px,#4277ce 155.8px,#4e71cd 161.6px,#596ccc 167.4px,#6567cb 173.1px,#7061ca 178.9px,#7b5cc9 184.7px,#8854c8 190.4px,#934bc8 196.2px,#a042c7 202.0px,#ab3ac6 207.8px,#b731c5 213.5px,#c328c5 219.3px,#cf20c4 225.1px,#db17c3 230.8px,#e20fc3 236.6px,#e807c3 242.4px,#ef04c2 248.1px,#f600c2 253.9px,#fa00c2 259.7px,#fb00c1 265.5px,#ff00c1 271.2px,#ff00c1 277.0px)"></i>
<i style="top:190px;height:7px;background:linear-gradient(90deg,#00bad5 0.0px,#00b8d5 5.8px,#00b6d5 11.5px,#00b5d5 17.3px,#00b3d5 23.1px,#00b2d4 28.9px,#00b0d4 34.6px,#00aed4 40.4px,#00add4 46.2px,#00abd4 51.9px,#00a9d4 57.7px,#00a7d4 63.5px,#00a4d4 69.2px,#00a2d4 75.0px,#00a0d4 80.8px,#009ed4 86.6px,#009cd4 92.3px,#0099d4 98.1px,#0096d4 103.9px,#0093d4 109.6px,#0090d4 115.4px,#008cd4 121.2px,#0289d4 127.0px,#0486d4 132.7px,#0e83d5 138.5px,#197ed4 144.3px,#2478d3 150.0px,#2e73d2 155.8px,#396dd1 161.6px,#4468d0 167.4px,#4f62cf 173.1px,#5a5dce 178.9px,#6558cd 184.7px,#724fcc 190.4px,#7e46cb 196.2px,#8c3ecb 202.0px,#9835ca 207.8px,#a52dc9 213.5px,#b224c9 219.3px,#bf1cc8 225.1px,#cb13c7 230.8px,#d30cc7 236.6px,#da04c7 242.4px,#e103c6 248.1px,#e800c6 253.9px,#ef00c6 259.7px,#f400c6 265.5px,#fb00c5 271.2px,#ff00c5 277.0px)"></i>
<i style="top:196px;height:7px;background:linear-gradient(90deg,#00b6dc 0.0px,#00b4dc 5.8px,#00b3db 11.5px,#00b1db 17.3px,#00afdb 23.1px,#00aeda 28.9px,#00acda 34.6px,#00abda 40.4px,#00a9d9 46.2px,#00a7d9 51.9px,#00a5d9 57.7px,#00a3d9 63.5px,#00a1d9 69.2px,#009fd9 75.0px,#009dd9 80.8px,#009bd8 86.6px,#0099d8 92.3px,#0095d8 98.1px,#0092d8 103.9px,#008fd8 109.6px,#008cd8 115.4px,#0089d8 121.2px,#0086d8 127.0px,#0183d8 132.7px,#047fd8 138.5px,#097ad7 144.3px,#1474d6 150.0px,#1a6fd5 155.8px,#2569d4 161.6px,#2f64d3 167.4px,#3a5ed2 173.1px,#4458d2 178.9px,#4e53d1 184.7px,#5c4bd0 190.4px,#6a42cf 196.2px,#783acf 202.0px,#8531ce 207.8px,#9329cd 213.5px,#a121cd 219.3px,#af18cc 225.1px,#bc10cc 230.8px,#c409cb 236.6px,#cb02cb 242.4px,#d301cb 248.1px,#da00ca 253.9px,#e200ca 259.7px,#e900ca 265.5px,#f100ca 271.2px,#f800c9 277.0px)"></i>
<i style="top:202px;height:7px;background:linear-gradient(90deg,#00b2e3 0.0px,#00b0e2 5.8px,#00afe2 11.5px,#00ade1 17.3px,#00ace1 23.1px,#00aae0 28.9px,#00a9e0 34.6px,#00a7df 40.4px,#00a5df 46.2px,#00a3df 51.9px,#00a1df 57.7px,#009fde 63.5px,#009dde 69.2px,#009bde 75.0px,#0099dd 80.8px,#0097dd 86.6px,#0095dd 92.3px,#0092dd 98.1px,#008fdc 103.9px,#008cdc 109.6px,#0088dc 115.4px,#0085dc 121.2px,#0082dc 127.0px,#007fdc 132.7px,#017cdb 138.5px,#0176db 144.3px,#0770da 150.0px,#0a6bd9 155.8px,#1165d8 161.6px,#1a5fd7 167.4px,#245ad6 173.1px,#2e54d5 178.9px,#384ed4 184.7px,#4746d4 190.4px,#553ed3 196.2px,#6436d3 202.0px,#722dd2 207.8px,#8125d1 213.5px,#8f1dd1 219.3px,#9e15d0 225.1px,#ad0cd0 230.8px,#b507cf 236.6px,#bc01cf 242.4px,#c501cf 248.1px,#cc00cf 253.9px,#d400cf 259.7px,#dc00ce 265.5px,#e400ce 271.2px,#ec00ce 277.0px)"></i>
<i style="top:208px;height:7px;background:linear-gradient(90deg,#00aee9 0.0px,#00ace9 5.8px,#00abe8 11.5px,#00a9e8 17.3px,#00a8e7 23.1px,#00a6e7 28.9px,#00a5e6 34.6px,#00a3e5 40.4px,#00a2e5 46.2px,#00a0e4 51.9px,#009ee4 57.7px,#009ce3 63.5px,#009ae3 69.2px,#0098e3 75.0px,#0096e2 80.8px,#0094e2 86.6px,#0092e1 92.3px,#008ee1 98.1px,#008be1 103.9px,#0088e0 109.6px,#0085e0 115.4px,#0082e0 121.2px,#007edf 127.0px,#007bdf 132.7px,#0078df 138.5px,#0072de 144.3px,#006cdd 150.0px,#0267dc 155.8px,#0561db 161.6px,#0a5bdb 167.4px,#1355da 173.1px,#1850d9 178.9px,#214ad8 184.7px,#3142d8 190.4px,#403ad7 196.2px,#5031d7 202.0px,#5f29d6 207.8px,#6f21d5 213.5px,#7e19d5 219.3px,#8e11d4 225.1px,#9d09d4 230.8px,#a605d4 236.6px,#ae00d3 242.4px,#b600d3 248.1px,#be00d3 253.9px,#c700d3 259.7px,#cf00d3 265.5px,#d800d2 271.2px,#e000d2 277.0px)"></i>
<i style="top:214px;height:6px;background:linear-gradient(90deg,#00aaf0 0.0px,#00a9ef 5.8px,#00a7ef 11.5px,#00a6ee 17.3px,#00a4ed 23.1px,#00a3ed 28.9px,#00a1ec 34.6px,#00a0eb 40.4px,#009eeb 46.2px,#009cea 51.9px,#009ae9 57.7px,#0098e9 63.5px,#0096e8 69.2px,#0094e8 75.0px,#0092e7 80.8px,#0090e6 86.6px,#008ee6 92.3px,#008be5 98.1px,#0088e5 103.9px,#0084e4 109.6px,#0081e4 115.4px,#007ee3 121.2px,#007be3 127.0px,#0077e3 132.7px,#0074e2 138.5px,#006ee1 144.3px,#0068e1 150.0px,#0063e0 155.8px,#025ddf 161.6px,#0257de 167.4px,#0651dd 173.1px,#064bdd 178.9px,#0b45dc 184.7px,#1c3ddb 190.4px,#2b35db 196.2px,#3c2dda 202.0px,#4c25da 207.8px,#5d1dd9 213.5px,#6d15d9 219.3px,#7e0dd9 225.1px,#8e05d8 230.8px,#9703d8 236.6px,#9f00d8 242.4px,#a800d8 248.1px,#b100d7 253.9px,#b900d7 259.7px,#c200d7 265.5px,#cb00d7 271.2px,#d300d7 277.0px)"></i>
<i style="top:219px;height:7px;background:linear-gradient(90deg,#00a6f6 0.0px,#00a5f6 5.8px,#00a3f5 11.5px,#00a2f4 17.3px,#00a0f4 23.1px,#009ff3 28.9px,#009df2 34.6px,#009cf1 40.4px,#009af0 46.2px,#0098ef 51.9px,#0096ef 57.7px,#0095ee 63.5px,#0093ed 69.2px,#0091ed 75.0px,#008fec 80.8px,#008deb 86.6px,#008bea 92.3px,#0087ea 98.1px,#0084e9 103.9px,#0081e9 109.6px,#007ee8 115.4px,#007ae7 121.2px,#0077e7 127.0px,#0074e6 132.7px,#0070e6 138.5px,#006ae5 144.3px,#0065e4 150.0px,#005ee3 155.8px,#0059e3 161.6px,#0053e2 167.4px,#004de1 173.1px,#0047e0 178.9px,#0041e0 184.7px,#0839df 190.4px,#1931df 196.2px,#2829de 202.0px,#3921de 207.8px,#4b19dd 213.5px,#5c11dd 219.3px,#6d0add 225.1px,#7e03dc 230.8px,#8802dc 236.6px,#9000dc 242.4px,#9a00dc 248.1px,#a300dc 253.9px,#ac00dc 259.7px,#b500db 265.5px,#be00db 271.2px,#c700db 277.0px)"></i>
<i style="top:225px;height:7px;background:linear-gradient(90deg,#00a2fc 0.0px,#00a1fc 5.8px,#00a0fc 11.5px,#009efb 17.3px,#009dfa 23.1px,#009bf9 28.9px,#009af8 34.6px,#0098f7 40.4px,#0097f6 46.2px,#0095f5 51.9px,#0093f4 57.7px,#0091f3 63.5px,#008ff2 69.2px,#008df2 75.0px,#008bf1 80.8px,#0089f0 86.6px,#0087ef 92.3px,#0084ee 98.1px,#0081ed 103.9px,#007ded 109.6px,#007aec 115.4px,#0077eb 121.2px,#0073ea 127.0px,#0070ea 132.7px,#006de9 138.5px,#0067e8 144.3px,#0061e8 150.0px,#005ae7 155.8px,#0054e6 161.6px,#004ee5 167.4px,#0048e5 173.1px,#0042e4 178.9px,#003ce3 184.7px,#0034e3 190.4px,#082de3 196.2px,#1725e2 202.0px,#261de2 207.8px,#3915e1 213.5px,#4b0ee1 219.3px,#5d08e1 225.1px,#6f01e0 230.8px,#7901e0 236.6px,#8200e0 242.4px,#8c00e0 248.1px,#9500e0 253.9px,#9e00e0 259.7px,#a800e0 265.5px,#b100e0 271.2px,#bb00e0 277.0px)"></i>
<i style="top:231px;height:7px;background:linear-gradient(90deg,#009fff 0.0px,#009dff 5.8px,#009cff 11.5px,#009afe 17.3px,#0099fd 23.1px,#0097fd 28.9px,#0096fc 34.6px,#0094fb 40.4px,#0093fa 46.2px,#0091fa 51.9px,#008ff9 57.7px,#008df8 63.5px,#008bf7 69.2px,#0089f6 75.0px,#0087f5 80.8px,#0086f4 86.6px,#0084f3 92.3px,#0080f2 98.1px,#007df1 103.9px,#007af0 109.6px,#0077ef 115.4px,#0074ee 121.2px,#0070ee 127.0px,#006ded 132.7px,#006aec 138.5px,#0064eb 144.3px,#005eea 150.0px,#0058ea 155.8px,#0052e9 161.6px,#004ce8 167.4px,#0046e8 173.1px,#0040e7 178.9px,#0039e6 184.7px,#0032e6 190.4px,#002ae6 196.2px,#0723e6 202.0px,#151be5 207.8px,#2213e5 213.5px,#350ce5 219.3px,#4606e4 225.1px,#5900e4 230.8px,#6300e4 236.6px,#6d00e4 242.4px,#7800e4 248.1px,#8100e4 253.9px,#8c00e4 259.7px,#9500e4 265.5px,#a000e4 271.2px,#a900e4 277.0px)"></i>
<i style="top:237px;height:6px;background:linear-gradient(90deg,#009bff 0.0px,#0099ff 5.8px,#0098ff 11.5px,#0096ff 17.3px,#0095fe 23.1px,#0093fe 28.9px,#0092fe 34.6px,#0090fe 40.4px,#008ffd 46.2px,#008dfd 51.9px,#008bfd 57.7px,#0089fc 63.5px,#0088fc 69.2px,#0086fa 75.0px,#0084f9 80.8px,#0082f8 86.6px,#0080f7 92.3px,#007df5 98.1px,#007af4 103.9px,#0077f3 109.6px,#0074f2 115.4px,#0071f1 121.2px,#006ef0 127.0px,#006bef 132.7px,#0067ee 138.5px,#0062ed 144.3px,#005ced 150.0px,#0056ec 155.8px,#0050eb 161.6px,#004aeb 167.4px,#0044ea 173.1px,#003fea 178.9px,#0039e9 184.7px,#0031e9 190.4px,#002ae8 196.2px,#0022e8 202.0px,#071be8 207.8px,#0e13e8 213.5px,#1b0ce8 219.3px,#2b06e7 225.1px,#3d00e7 230.8px,#4800e7 236.6px,#5200e7 242.4px,#5e00e7 248.1px,#6800e7 253.9px,#7300e7 259.7px,#7d00e7 265.5px,#8800e7 271.2px,#9300e7 277.0px)"></i>
<i style="top:242px;height:7px;background:linear-gradient(90deg,#0097ff 0.0px,#0095ff 5.8px,#0094ff 11.5px,#0092ff 17.3px,#0091ff 23.1px,#008fff 28.9px,#008eff 34.6px,#008cff 40.4px,#008bff 46.2px,#0089ff 51.9px,#0087ff 57.7px,#0086ff 63.5px,#0084fe 69.2px,#0082fd 75.0px,#0080fc 80.8px,#007efb 86.6px,#007dfa 92.3px,#007af9 98.1px,#0077f8 103.9px,#0074f6 109.6px,#0071f5 115.4px,#006ef4 121.2px,#006bf3 127.0px,#0068f1 132.7px,#0065f0 138.5px,#005fef 144.3px,#005aef 150.0px,#0054ee 155.8px,#004eee 161.6px,#0049ed 167.4px,#0043ed 173.1px,#003eec 178.9px,#0038eb 184.7px,#0031eb 190.4px,#0029eb 196.2px,#0022eb 202.0px,#001beb 207.8px,#0313eb 213.5px,#0a0cea 219.3px,#1306ea 225.1px,#2300ea 230.8px,#2d00ea 236.6px,#3800ea 242.4px,#4400ea 248.1px,#4f00eb 253.9px,#5a00eb 259.7px,#6500eb 265.5px,#7100eb 271.2px,#7c00eb 277.0px)"></i>
<i style="top:248px;height:7px;background:linear-gradient(90deg,#0093ff 0.0px,#0092ff 5.8px,#0090ff 11.5px,#008fff 17.3px,#008dff 23.1px,#008cff 28.9px,#008aff 34.6px,#0089ff 40.4px,#0087ff 46.2px,#0085ff 51.9px,#0084ff 57.7px,#0082ff 63.5px,#0080ff 69.2px,#007eff 75.0px,#007dfe 80.8px,#007bfe 86.6px,#0079fd 92.3px,#0076fc 98.1px,#0073fb 103.9px,#0071f9 109.6px,#006ef8 115.4px,#006bf6 121.2px,#0068f5 127.0px,#0066f4 132.7px,#0063f2 138.5px,#005df2 144.3px,#0058f1 150.0px,#0052f1 155.8px,#004df0 161.6px,#0048f0 167.4px,#0042ef 173.1px,#003def 178.9px,#0037ee 184.7px,#0030ee 190.4px,#0029ee 196.2px,#0022ee 202.0px,#001bee 207.8px,#0013ee 213.5px,#030ced 219.3px,#0306ed 225.1px,#0c00ed 230.8px,#1400ed 236.6px,#1d00ee 242.4px,#2a00ee 248.1px,#3500ee 253.9px,#4200ee 259.7px,#4e00ee 265.5px,#5a00ee 271.2px,#6600ee 277.0px)"></i>
<i style="top:254px;height:7px;background:linear-gradient(90deg,#008fff 0.0px,#008eff 5.8px,#008cff 11.5px,#008bff 17.3px,#0089ff 23.1px,#0088ff 28.9px,#0086ff 34.6px,#0085ff 40.4px,#0083ff 46.2px,#0081ff 51.9px,#0080ff 57.7px,#007eff 63.5px,#007cff 69.2px,#007bff 75.0px,#0079ff 80.8px,#0077ff 86.6px,#0076ff 92.3px,#0073fe 98.1px,#0070fd 103.9px,#006efc 109.6px,#006bfb 115.4px,#0068f9 121.2px,#0066f8 127.0px,#0063f6 132.7px,#0060f4 138.5px,#005bf4 144.3px,#0056f3 150.0px,#0051f3 155.8px,#004bf2 161.6px,#0046f2 167.4px,#0041f1 173.1px,#003cf1 178.9px,#0036f1 184.7px,#002ff1 190.4px,#0028f0 196.2px,#0021f0 202.0px,#001af0 207.8px,#0013f0 213.5px,#000cf0 219.3px,#0006f0 225.1px,#0000f0 230.8px,#0400f1 236.6px,#0c00f1 242.4px,#1200f1 248.1px,#1e00f1 253.9px,#2900f2 259.7px,#3600f2 265.5px,#4300f2 271.2px,#4f00f2 277.0px)"></i>
<i style="top:260px;height:6px;background:linear-gradient(90deg,#008cff 0.0px,#008aff 5.8px,#0088ff 11.5px,#0087ff 17.3px,#0085ff 23.1px,#0084ff 28.9px,#0082ff 34.6px,#0081ff 40.4px,#007fff 46.2px,#007dff 51.9px,#007cff 57.7px,#007aff 63.5px,#0079ff 69.2px,#0077ff 75.0px,#0075ff 80.8px,#0074ff 86.6px,#0072ff 92.3px,#0070ff 98.1px,#006dfe 103.9px,#006bfe 109.6px,#0068fe 115.4px,#0066fc 121.2px,#0063fa 127.0px,#0061f8 132.7px,#005ef7 138.5px,#0059f6 144.3px,#0054f6 150.0px,#004ff5 155.8px,#004af5 161.6px,#0045f4 167.4px,#0040f4 173.1px,#003bf3 178.9px,#0036f3 184.7px,#002ff3 190.4px,#0028f3 196.2px,#0021f3 202.0px,#001af3 207.8px,#0013f3 213.5px,#000df3 219.3px,#0006f3 225.1px,#0000f3 230.8px,#0000f4 236.6px,#0400f4 242.4px,#0400f4 248.1px,#0a00f5 253.9px,#1300f5 259.7px,#1e00f5 265.5px,#2c00f6 271.2px,#3900f6 277.0px)"></i>
<i style="top:265px;height:7px;background:linear-gradient(90deg,#0088ff 0.0px,#0086ff 5.8px,#0085ff 11.5px,#0083ff 17.3px,#0081ff 23.1px,#0080ff 28.9px,#007eff 34.6px,#007dff 40.4px,#007bff 46.2px,#007aff 51.9px,#0078ff 57.7px,#0076ff 63.5px,#0075ff 69.2px,#0073ff 75.0px,#0072ff 80.8px,#0070ff 86.6px,#006eff 92.3px,#006cff 98.1px,#006aff 103.9px,#0067ff 109.6px,#0065ff 115.4px,#0063fe 121.2px,#0060fc 127.0px,#005efb 132.7px,#005cf9 138.5px,#0057f8 144.3px,#0052f8 150.0px,#004df8 155.8px,#0048f7 161.6px,#0043f7 167.4px,#003ff6 173.1px,#003af6 178.9px,#0035f6 184.7px,#002ef6 190.4px,#0027f6 196.2px,#0021f6 202.0px,#001af6 207.8px,#0014f6 213.5px,#000df6 219.3px,#0006f6 225.1px,#0000f7 230.8px,#0000f7 236.6px,#0000f7 242.4px,#0000f8 248.1px,#0000f8 253.9px,#0400f8 259.7px,#0d00f9 265.5px,#1400f9 271.2px,#2200f9 277.0px)"></i>
<i style="top:271px;height:6px;background:linear-gradient(90deg,#0084ff 0.0px,#0082ff 5.8px,#0081ff 11.5px,#007fff 17.3px,#007dff 23.1px,#007cff 28.9px,#007aff 34.6px,#0079ff 40.4px,#0077ff 46.2px,#0076ff 51.9px,#0074ff 57.7px,#0073ff 63.5px,#0071ff 69.2px,#0070ff 75.0px,#006eff 80.8px,#006cff 86.6px,#006bff 92.3px,#0069ff 98.1px,#0066ff 103.9px,#0064ff 109.6px,#0062ff 115.4px,#0060ff 121.2px,#005efe 127.0px,#005cfd 132.7px,#0059fb 138.5px,#0055fb 144.3px,#0050fa 150.0px,#004bfa 155.8px,#0047f9 161.6px,#0042f9 167.4px,#003df9 173.1px,#0039f8 178.9px,#0034f8 184.7px,#002ef8 190.4px,#0027f8 196.2px,#0021f9 202.0px,#001af9 207.8px,#0014f9 213.5px,#000df9 219.3px,#0006f9 225.1px,#0000fa 230.8px,#0000fa 236.6px,#0000fb 242.4px,#0000fb 248.1px,#0000fb 253.9px,#0000fc 259.7px,#0400fc 265.5px,#0500fd 271.2px,#0c00fd 277.0px)"></i>
 </div>
</div>
<div id="grid" class="a" style="left:203px;top:207px;width:279px;height:279px">
<b style="left:12px;top:1px;width:1px;height:277px;background:#c0c0c0"></b>
<b style="top:12px;left:1px;height:1px;width:277px;background:#c0c0c0"></b>
<b style="left:23px;top:1px;width:1px;height:277px;background:#808080"></b>
<b style="top:23px;left:1px;height:1px;width:277px;background:#808080"></b>
<b style="left:35px;top:1px;width:1px;height:277px;background:#c0c0c0"></b>
<b style="top:35px;left:1px;height:1px;width:277px;background:#c0c0c0"></b>
<b style="left:46px;top:1px;width:1px;height:277px;background:#c0c0c0"></b>
<b style="top:46px;left:1px;height:1px;width:277px;background:#c0c0c0"></b>
<b style="left:58px;top:1px;width:1px;height:277px;background:#c0c0c0"></b>
<b style="top:58px;left:1px;height:1px;width:277px;background:#c0c0c0"></b>
<b style="left:70px;top:1px;width:1px;height:277px;background:#c0c0c0"></b>
<b style="top:70px;left:1px;height:1px;width:277px;background:#c0c0c0"></b>
<b style="left:81px;top:1px;width:1px;height:277px;background:#c0c0c0"></b>
<b style="top:81px;left:1px;height:1px;width:277px;background:#c0c0c0"></b>
<b style="left:93px;top:1px;width:1px;height:277px;background:#c0c0c0"></b>
<b style="top:93px;left:1px;height:1px;width:277px;background:#c0c0c0"></b>
<b style="left:104px;top:1px;width:1px;height:277px;background:#c0c0c0"></b>
<b style="top:104px;left:1px;height:1px;width:277px;background:#c0c0c0"></b>
<b style="left:116px;top:1px;width:1px;height:277px;background:#c0c0c0"></b>
<b style="top:116px;left:1px;height:1px;width:277px;background:#c0c0c0"></b>
<b style="left:127px;top:1px;width:1px;height:277px;background:#c0c0c0"></b>
<b style="top:127px;left:1px;height:1px;width:277px;background:#c0c0c0"></b>
<b style="left:151px;top:1px;width:1px;height:277px;background:#c0c0c0"></b>
<b style="top:151px;left:1px;height:1px;width:277px;background:#c0c0c0"></b>
<b style="left:162px;top:1px;width:1px;height:277px;background:#c0c0c0"></b>
<b style="top:162px;left:1px;height:1px;width:277px;background:#c0c0c0"></b>
<b style="left:174px;top:1px;width:1px;height:277px;background:#c0c0c0"></b>
<b style="top:174px;left:1px;height:1px;width:277px;background:#c0c0c0"></b>
<b style="left:185px;top:1px;width:1px;height:277px;background:#c0c0c0"></b>
<b style="top:185px;left:1px;height:1px;width:277px;background:#c0c0c0"></b>
<b style="left:197px;top:1px;width:1px;height:277px;background:#c0c0c0"></b>
<b style="top:197px;left:1px;height:1px;width:277px;background:#c0c0c0"></b>
<b style="left:208px;top:1px;width:1px;height:277px;background:#c0c0c0"></b>
<b style="top:208px;left:1px;height:1px;width:277px;background:#c0c0c0"></b>
<b style="left:220px;top:1px;width:1px;height:277px;background:#c0c0c0"></b>
<b style="top:220px;left:1px;height:1px;width:277px;background:#c0c0c0"></b>
<b style="left:232px;top:1px;width:1px;height:277px;background:#c0c0c0"></b>
<b style="top:232px;left:1px;height:1px;width:277px;background:#c0c0c0"></b>
<b style="left:243px;top:1px;width:1px;height:277px;background:#c0c0c0"></b>
<b style="top:243px;left:1px;height:1px;width:277px;background:#c0c0c0"></b>
<b style="left:255px;top:1px;width:1px;height:277px;background:#808080"></b>
<b style="top:255px;left:1px;height:1px;width:277px;background:#808080"></b>
<b style="left:266px;top:1px;width:1px;height:277px;background:#c0c0c0"></b>
<b style="top:266px;left:1px;height:1px;width:277px;background:#c0c0c0"></b>
<b style="left:139px;top:1px;width:1px;height:277px;background:#404040"></b>
<b style="top:139px;left:1px;height:1px;width:277px;background:#404040"></b>
</div>
<svg class="a" style="left:203px;top:207px" width="279" height="279" viewBox="0 0 279 279">
<polygon points="52.2,103.8 70.8,96.2 97.0,91.2 116.5,88.7 139.6,85.8 167.0,82.3 185.8,80.4 200.0,79.2 221.8,85.0 228.8,140.3 223.5,157.0 201.3,170.6 162.0,187.8 139.2,196.6 110.5,206.3 95.8,203.0 80.9,189.4 68.9,173.3 57.8,155.2 51.2,139.2 48.8,121.3" fill="none" stroke="#ff0000" stroke-width="1.2" stroke-linejoin="round"/>
<polygon points="51.6,103.5 70.6,95.1 97.0,87.2 128.0,81.3 151.0,79.2 200.0,78.3 222.2,84.6 229.8,140.3 225.6,156.3 202.0,171.6 162.5,188.8 139.4,197.6 110.7,207.1 95.5,203.7 80.4,190.0 68.3,173.8 57.2,155.6 50.5,139.5 48.1,121.3" fill="none" stroke="#0000ff" stroke-width="1.3" stroke-linejoin="round"/>
<circle cx="140" cy="140" r="4" fill="#0000ff"/>
</svg>

<!-- slider -->
<div class="t" style="left:695px;top:207px">100</div>
<div class="t" style="left:669px;top:327px">50</div>
<div class="t" style="left:701px;top:447px">0</div>
<div class="a" style="left:697px;top:229px;width:4px;height:209px;border:1px solid #d6d6d6;background:#e7eaea"></div>
<div id="ticks">
<b style="left:711px;top:234px;width:5px;height:1px"></b>
<b style="left:711px;top:236px;width:3px;height:1px"></b>
<b style="left:711px;top:238px;width:3px;height:1px"></b>
<b style="left:711px;top:240px;width:3px;height:1px"></b>
<b style="left:711px;top:242px;width:3px;height:1px"></b>
<b style="left:711px;top:244px;width:3px;height:1px"></b>
<b style="left:711px;top:246px;width:3px;height:1px"></b>
<b style="left:711px;top:248px;width:3px;height:1px"></b>
<b style="left:711px;top:250px;width:3px;height:1px"></b>
<b style="left:711px;top:252px;width:3px;height:1px"></b>
<b style="left:711px;top:254px;width:3px;height:1px"></b>
<b style="left:711px;top:256px;width:3px;height:1px"></b>
<b style="left:711px;top:258px;width:3px;height:1px"></b>
<b style="left:711px;top:260px;width:3px;height:1px"></b>
<b style="left:711px;top:262px;width:3px;height:1px"></b>
<b style="left:711px;top:264px;width:3px;height:1px"></b>
<b style="left:711px;top:266px;width:3px;height:1px"></b>
<b style="left:711px;top:268px;width:3px;height:1px"></b>
<b style="left:711px;top:270px;width:3px;height:1px"></b>
<b style="left:711px;top:272px;width:3px;height:1px"></b>
<b style="left:711px;top:274px;width:3px;height:1px"></b>
<b style="left:711px;top:276px;width:3px;height:1px"></b>
<b style="left:711px;top:278px;width:3px;height:1px"></b>
<b style="left:711px;top:280px;width:3px;height:1px"></b>
<b style="left:711px;top:282px;width:3px;height:1px"></b>
<b style="left:711px;top:284px;width:3px;height:1px"></b>
<b style="left:711px;top:286px;width:3px;height:1px"></b>
<b style="left:711px;top:288px;width:3px;height:1px"></b>
<b style="left:711px;top:290px;width:3px;height:1px"></b>
<b style="left:711px;top:292px;width:3px;height:1px"></b>
<b style="left:711px;top:294px;width:3px;height:1px"></b>
<b style="left:711px;top:296px;width:3px;height:1px"></b>
<b style="left:711px;top:298px;width:3px;height:1px"></b>
<b style="left:711px;top:300px;width:3px;height:1px"></b>
<b style="left:711px;top:302px;width:3px;height:1px"></b>
<b style="left:711px;top:304px;width:3px;height:1px"></b>
<b style="left:711px;top:306px;width:3px;height:1px"></b>
<b style="left:711px;top:308px;width:3px;height:1px"></b>
<b style="left:711px;top:310px;width:3px;height:1px"></b>
<b style="left:711px;top:312px;width:3px;height:1px"></b>
<b style="left:711px;top:314px;width:3px;height:1px"></b>
<b style="left:711px;top:316px;width:3px;height:1px"></b>
<b style="left:711px;top:318px;width:3px;height:1px"></b>
<b style="left:711px;top:320px;width:3px;height:1px"></b>
<b style="left:711px;top:322px;width:3px;height:1px"></b>
<b style="left:711px;top:324px;width:3px;height:1px"></b>
<b style="left:711px;top:326px;width:3px;height:1px"></b>
<b style="left:711px;top:328px;width:3px;height:1px"></b>
<b style="left:711px;top:330px;width:3px;height:1px"></b>
<b style="left:711px;top:332px;width:3px;height:1px"></b>
<b style="left:711px;top:334px;width:3px;height:1px"></b>
<b style="left:711px;top:335px;width:3px;height:1px"></b>
<b style="left:711px;top:337px;width:3px;height:1px"></b>
<b style="left:711px;top:339px;width:3px;height:1px"></b>
<b style="left:711px;top:341px;width:3px;height:1px"></b>
<b style="left:711px;top:343px;width:3px;height:1px"></b>
<b style="left:711px;top:345px;width:3px;height:1px"></b>
<b style="left:711px;top:347px;width:3px;height:1px"></b>
<b style="left:711px;top:349px;width:3px;height:1px"></b>
<b style="left:711px;top:351px;width:3px;height:1px"></b>
<b style="left:711px;top:353px;width:3px;height:1px"></b>
<b style="left:711px;top:355px;width:3px;height:1px"></b>
<b style="left:711px;top:357px;width:3px;height:1px"></b>
<b style="left:711px;top:359px;width:3px;height:1px"></b>
<b style="left:711px;top:361px;width:3px;height:1px"></b>
<b style="left:711px;top:363px;width:3px;height:1px"></b>
<b style="left:711px;top:365px;width:3px;height:1px"></b>
<b style="left:711px;top:367px;width:3px;height:1px"></b>
<b style="left:711px;top:369px;width:3px;height:1px"></b>
<b style="left:711px;top:371px;width:3px;height:1px"></b>
<b style="left:711px;top:373px;width:3px;height:1px"></b>
<b style="left:711px;top:375px;width:3px;height:1px"></b>
<b style="left:711px;top:377px;width:3px;height:1px"></b>
<b style="left:711px;top:379px;width:3px;height:1px"></b>
<b style="left:711px;top:381px;width:3px;height:1px"></b>
<b style="left:711px;top:383px;width:3px;height:1px"></b>
<b style="left:711px;top:385px;width:3px;height:1px"></b>
<b style="left:711px;top:387px;width:3px;height:1px"></b>
<b style="left:711px;top:389px;width:3px;height:1px"></b>
<b style="left:711px;top:391px;width:3px;height:1px"></b>
<b style="left:711px;top:393px;width:3px;height:1px"></b>
<b style="left:711px;top:395px;width:3px;height:1px"></b>
<b style="left:711px;top:397px;width:3px;height:1px"></b>
<b style="left:711px;top:399px;width:3px;height:1px"></b>
<b style="left:711px;top:401px;width:3px;height:1px"></b>
<b style="left:711px;top:403px;width:3px;height:1px"></b>
<b style="left:711px;top:405px;width:3px;height:1px"></b>
<b style="left:711px;top:407px;width:3px;height:1px"></b>
<b style="left:711px;top:409px;width:3px;height:1px"></b>
<b style="left:711px;top:411px;width:3px;height:1px"></b>
<b style="left:711px;top:413px;width:3px;height:1px"></b>
<b style="left:711px;top:415px;width:3px;height:1px"></b>
<b style="left:711px;top:417px;width:3px;height:1px"></b>
<b style="left:711px;top:419px;width:3px;height:1px"></b>
<b style="left:711px;top:421px;width:3px;height:1px"></b>
<b style="left:711px;top:423px;width:3px;height:1px"></b>
<b style="left:711px;top:425px;width:3px;height:1px"></b>
<b style="left:711px;top:427px;width:3px;height:1px"></b>
<b style="left:711px;top:429px;width:3px;height:1px"></b>
<b style="left:711px;top:431px;width:3px;height:1px"></b>
<b style="left:711px;top:432px;width:5px;height:1px"></b>
</div>
<svg class="a" style="left:690px;top:327px" width="22" height="13" viewBox="0 0 22 13"><path d="M1 1H15L20 6.5L15 12H1Z" fill="#0078d7"/></svg>
<div class="cb" style="left:666px;top:472px"></div>
<div class="t" style="left:682px;top:472px">ab-Projektion</div>

<!-- profile rows -->
<div class="btn" style="left:29px;top:503px;width:96px;height:21px"></div>
<div class="a" style="left:47px;top:507px;width:60px;height:13px;background:#ff0000"></div>
<div class="btn" style="left:29px;top:529px;width:96px;height:21px"></div>
<div class="a" style="left:47px;top:533px;width:60px;height:13px;background:#0000ff"></div>
<div class="cb" style="left:136px;top:507px"></div>
<svg class="a" style="left:136px;top:507px" width="13" height="13" viewBox="0 0 13 13"><path d="M2 6.5L5.3 9.8L11.3 3.5" stroke="#3c3c3c" stroke-width="1.1" fill="none"/></svg>
<div class="t" style="left:152px;top:507px">Beispielprofil:</div>
<div class="cb" style="left:136px;top:533px"></div>
<svg class="a" style="left:136px;top:533px" width="13" height="13" viewBox="0 0 13 13"><path d="M2 6.5L5.3 9.8L11.3 3.5" stroke="#3c3c3c" stroke-width="1.1" fill="none"/></svg>
<div class="t" style="left:152px;top:533px">Referenzprofil:</div>
<div class="t" style="left:244px;top:507px;transform:scaleX(0.93);transform-origin:0 0">PS_Production_HP_Latex_360_HP Latex_IGEPA ...10p_CMYKcm_100_Production_300x300_i1iO.icc</div>
<div class="t" style="left:244px;top:533px;transform:scaleX(0.94);transform-origin:0 0">PS_Production_HP_Latex_360_HP Latex_Orajet 3164G-010_Contone_300x300_HighQuality.icc</div>
<div class="btn" style="left:742px;top:530px;width:22px;height:20px"></div>
<svg class="a" style="left:743px;top:531px" width="20" height="18" viewBox="0 0 20 18">
<g fill="#1f5f9a"><circle cx="8" cy="8.3" r="4.6"/>
<path d="M7 2.5h2v2h-2zM7 12.2h2v2h-2zM2.2 7.3h2v2h-2zM11.8 7.3h2v2h-2z"/>
<path d="M3.8 3.5l1.4-1.1 1.3 1.5-1.4 1.1zM10.2 12.2l1.4-1.1 1.3 1.5-1.4 1.1zM3.5 12.5l1.1-1.4 1.5 1.3-1.1 1.4zM10 4l1.1-1.4 1.5 1.3-1.1 1.4z"/>
<circle cx="14.5" cy="11.5" r="2.6"/></g>
<circle cx="8" cy="8.3" r="3.2" fill="#8a8a8a"/>
<circle cx="14.5" cy="11.5" r="1.4" fill="#8a8a8a"/>
</svg>

<!-- bottom label -->
<div class="a" style="left:11px;top:554px;width:766px;height:29px;overflow:hidden">
<div class="t" style="left:6px;top:11px;line-height:15px;transform:scaleX(0.964);transform-origin:0 0">CMYK Profile werden mit dem maximalen Farbumfang (ohne Separationseigenschaften) dargestellt. Die Darstellung von Multicolor-Profilen ist<br>nicht möglich.</div>
</div>
</body></html>
